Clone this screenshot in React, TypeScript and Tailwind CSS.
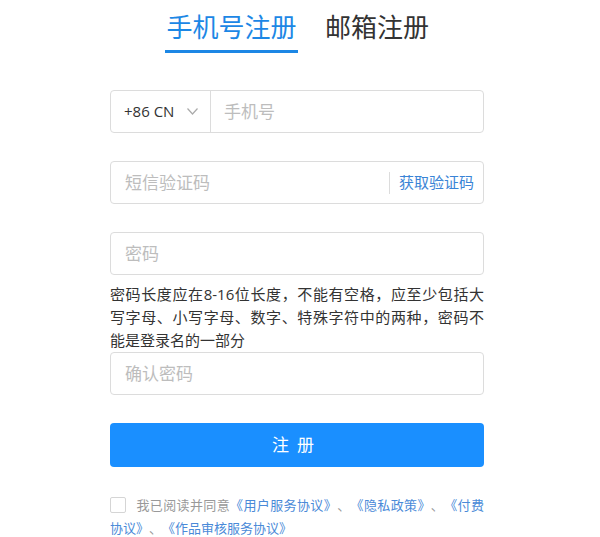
import { useState } from 'react';

const font = { fontFamily: '"Open Sans", "Noto Sans CJK SC", sans-serif' };

function Field({ placeholder, type = 'text' }: { placeholder: string; type?: string }) {
  return (
    <div className="flex h-[43px] items-center rounded-[4px] border border-[#dcdcdc] bg-white">
      <input
        type={type}
        placeholder={placeholder}
        className="h-full w-full rounded-[4px] bg-transparent px-[14px] text-[17px] text-[#333] outline-none placeholder:text-[#bdbdbd]"
      />
    </div>
  );
}

export default function App() {
  const [agreed, setAgreed] = useState(false);

  return (
    <div
      className="flex min-h-[537px] w-full justify-center bg-white pr-[6px] [text-spacing-trim:space-all]"
      style={font}
    >
      <div className="w-[374px] pt-[10px]">
        {/* tabs */}
        <div className="flex h-[41px] items-start justify-center gap-[27px]">
          <div className="flex flex-col items-center">
            <span className="text-[26px] leading-[34px] text-[#1c87e5]">手机号注册</span>
            <span className="mt-[6px] h-[3px] w-[133px] bg-[#1c87e5]" />
          </div>
          <span className="text-[26px] leading-[34px] text-[#333]">邮箱注册</span>
        </div>

        <div className="mt-[39px] flex flex-col">
          {/* phone */}
          <div className="flex h-[43px] items-center rounded-[4px] border border-[#dcdcdc]">
            <div className="flex h-full w-[100px] items-center border-r border-[#dcdcdc] pl-[13px]">
              <span className="text-[15px] text-[#333]">+86 CN</span>
              <svg className="ml-[13px]" width="11" height="7" viewBox="0 0 11 7" fill="none">
                <path d="M0.5 0.5 L5.5 6 L10.5 0.5" stroke="#aaa" strokeWidth="1.2" />
              </svg>
            </div>
            <input
              placeholder="手机号"
              className="h-full flex-1 bg-transparent px-[13px] text-[17px] outline-none placeholder:text-[#bdbdbd]"
            />
          </div>

          {/* sms */}
          <div className="mt-[28px] flex h-[43px] items-center rounded-[4px] border border-[#dcdcdc]">
            <input
              placeholder="短信验证码"
              className="h-full flex-1 bg-transparent px-[14px] text-[17px] outline-none placeholder:text-[#bdbdbd]"
            />
            <div className="h-[22px] w-px bg-[#dcdcdc]" />
            <button className="px-[9px] text-[15px] whitespace-nowrap text-[#3a84d6]">获取验证码</button>
          </div>

          <div className="mt-[28px]">
            <Field placeholder="密码" type="password" />
          </div>
          <p className="mt-[8px] text-justify text-[15px] leading-[23px] text-[#333]">
            密码长度应在8-16位长度，不能有空格，应至少包括大写字母、小写字母、数字、特殊字符中的两种，密码不能是登录名的一部分
          </p>
          <div className="mt-0">
            <Field placeholder="确认密码" type="password" />
          </div>

          <button className="mt-[28px] h-[44px] rounded-[4px] bg-[#1a8fff] text-[17px] tracking-[8px] text-white">
            注册
          </button>

          <p className="mt-[27px] text-justify text-[13px] leading-[23px] text-[#999]">
            <span
              onClick={() => setAgreed(!agreed)}
              className={`mr-[10px] inline-block h-[16px] w-[16px] translate-y-[3px] rounded-[2px] border ${agreed ? 'border-[#1a8fff] bg-[#1a8fff]' : 'border-[#d5d5d5] bg-white'}`}
            />
            我已阅读并同意<span className="text-[#4a8ad8]">《用户服务协议》</span>、<span className="text-[#4a8ad8]">《隐私政策》</span>、<span className="text-[#4a8ad8]">《付费协议》</span>、<span className="text-[#4a8ad8]">《作品审核服务协议》</span>
          </p>
        </div>
      </div>
    </div>
  );
}
